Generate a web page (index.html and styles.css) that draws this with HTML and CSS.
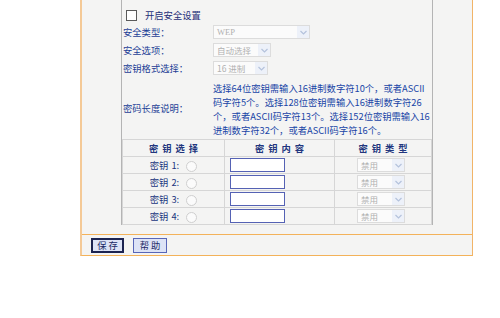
FILE: index.html
```html
<!DOCTYPE html>
<html>
<head>
<meta charset="utf-8">
<link rel="stylesheet" href="styles.css">
</head>
<body>
<div class="panel">
  <div class="content">
    <div class="box">
      <div class="check-row">
        <span class="checkbox"></span>
        <span class="check-label">开启安全设置</span>
      </div>
      <div class="form-row">
        <span class="label">安全类型：</span>
        <span class="select sel-wep"><span class="sel-text">WEP</span><span class="arrow"><svg width="7" height="5" viewBox="0 0 7 5"><path d="M0.5 1 L3.5 4 L6.5 1" fill="none" stroke="#b4c2dc" stroke-width="1.2"/></svg></span></span>
      </div>
      <div class="form-row">
        <span class="label">安全选项：</span>
        <span class="select sel-auto"><span class="sel-text">自动选择</span><span class="arrow"><svg width="7" height="5" viewBox="0 0 7 5"><path d="M0.5 1 L3.5 4 L6.5 1" fill="none" stroke="#b4c2dc" stroke-width="1.2"/></svg></span></span>
      </div>
      <div class="form-row">
        <span class="label">密钥格式选择：</span>
        <span class="select sel-hex"><span class="sel-text">16 进制</span><span class="arrow"><svg width="7" height="5" viewBox="0 0 7 5"><path d="M0.5 1 L3.5 4 L6.5 1" fill="none" stroke="#b4c2dc" stroke-width="1.2"/></svg></span></span>
      </div>
      <div class="desc-row">
        <span class="label desc-label">密码长度说明：</span>
        <p class="desc">选择64位密钥需输入16进制数字符10个，或者ASCII<br>码字符5个。选择128位密钥需输入16进制数字符26<br>个，或者ASCII码字符13个。选择152位密钥需输入16<br>进制数字符32个，或者ASCII码字符16个。</p>
      </div>
      <table class="keys">
        <colgroup><col class="c1"><col class="c2"><col class="c3"></colgroup>
        <thead>
          <tr><th>密钥选择</th><th>密钥内容</th><th>密钥类型</th></tr>
        </thead>
        <tbody>
          <tr><td class="kname">密钥 1: <span class="radio"></span></td><td class="kval"><span class="input"></span></td><td class="ktype"><span class="select sel-type"><span class="sel-text">禁用</span><span class="arrow"><svg width="7" height="5" viewBox="0 0 7 5"><path d="M0.5 1 L3.5 4 L6.5 1" fill="none" stroke="#b4c2dc" stroke-width="1.2"/></svg></span></span></td></tr>
          <tr><td class="kname">密钥 2: <span class="radio"></span></td><td class="kval"><span class="input"></span></td><td class="ktype"><span class="select sel-type"><span class="sel-text">禁用</span><span class="arrow"><svg width="7" height="5" viewBox="0 0 7 5"><path d="M0.5 1 L3.5 4 L6.5 1" fill="none" stroke="#b4c2dc" stroke-width="1.2"/></svg></span></span></td></tr>
          <tr><td class="kname">密钥 3: <span class="radio"></span></td><td class="kval"><span class="input"></span></td><td class="ktype"><span class="select sel-type"><span class="sel-text">禁用</span><span class="arrow"><svg width="7" height="5" viewBox="0 0 7 5"><path d="M0.5 1 L3.5 4 L6.5 1" fill="none" stroke="#b4c2dc" stroke-width="1.2"/></svg></span></span></td></tr>
          <tr><td class="kname">密钥 4: <span class="radio"></span></td><td class="kval"><span class="input"></span></td><td class="ktype"><span class="select sel-type"><span class="sel-text">禁用</span><span class="arrow"><svg width="7" height="5" viewBox="0 0 7 5"><path d="M0.5 1 L3.5 4 L6.5 1" fill="none" stroke="#b4c2dc" stroke-width="1.2"/></svg></span></span></td></tr>
        </tbody>
      </table>
    </div>
  </div>
  <div class="buttons">
    <span class="btn btn-save">保 存</span>
    <span class="btn btn-help">帮 助</span>
  </div>
</div>
</body>
</html>
```
FILE: styles.css
```css
html, body {
  margin: 0;
  padding: 0;
  background: #ffffff;
}
body {
  font-family: "Noto Sans CJK SC", "Liberation Serif", sans-serif;
  font-size: 9.3px;
  color: #1d3e96;
}
.panel {
  margin-left: 80px;
  width: 393px;
  box-sizing: border-box;
  border-left: 2px solid #f4c996;
  border-right: 1px solid #f1b468;
  border-bottom: 1px solid #f3b25a;
  background: #f4f4f3;
}
.content {
  padding: 0 39px 9px 39px;
}
.box {
  border-left: 1px solid #b4b4b4;
  border-right: 1px solid #b4b4b4;
  padding-top: 7px;
}
.check-row {
  height: 16px;
  display: flex;
  align-items: center;
  padding-left: 4px;
}
.checkbox {
  width: 9px;
  height: 9px;
  border: 1px solid #5a5a5a;
  background: #fff;
  margin-right: 8px;
}
.check-label {
  color: #1f2f78;
}
.form-row {
  height: 18px;
  display: flex;
  align-items: center;
}
.label {
  width: 90px;
  padding-left: 1px;
  flex: none;
}
.select {
  display: flex;
  align-items: center;
  height: 14px;
  box-sizing: border-box;
  border: 1px solid #dcdcdc;
  background: #fbfbfb;
  color: #b0b0b0;
  font-size: 8.5px;
}
.sel-text {
  flex: 1;
  padding-left: 3px;
  white-space: nowrap;
}
.arrow {
  width: 12px;
  height: 12px;
  background: #edf1f9;
  display: flex;
  align-items: center;
  justify-content: center;
}
.sel-wep { width: 97px; font-family: "Liberation Serif", serif; }
.sel-auto { width: 58px; }
.sel-hex { width: 55px; }
.sel-type { width: 48px; }
.desc-row {
  display: flex;
  align-items: center;
  padding: 4px 0 2px 0;
}
.desc-label {
  padding-bottom: 3px;
}
.desc {
  margin: 0;
  line-height: 14px;
  white-space: nowrap;
  color: #1844a6;
}
.keys {
  width: 100%;
  border-collapse: collapse;
  border: 1px solid #bdbdbd;
  border-bottom-color: #a8a8a8;
}
.c1 { width: 102px; }
.c2 { width: 110px; }
.keys th, .keys td {
  border: 1px solid #d6d6d6;
  height: 16px;
  padding: 0;
  background: #f4f4f3;
}
.keys th {
  font-weight: bold;
  color: #22367e;
  text-align: center;
  letter-spacing: 4px;
  text-indent: 4px;
}
.kname {
  text-align: center;
  color: #22367e;
  word-spacing: 1px;
}
.radio {
  display: inline-block;
  width: 9px;
  height: 9px;
  border: 1px solid #cfcfcf;
  border-radius: 50%;
  background: #fbfbfb;
  vertical-align: middle;
  margin-left: 4px;
}
.kval {
  padding-left: 5px !important;
}
.input {
  display: block;
  width: 55px;
  height: 14px;
  box-sizing: border-box;
  border: 1px solid #5562b4;
  background: #fff;
}
.ktype {
  padding-left: 22px !important;
}
.buttons {
  border-top: 1px solid #f3b25a;
  height: 20px;
  display: flex;
  align-items: center;
  gap: 9px;
  padding-left: 9px;
}
.btn {
  box-sizing: border-box;
  height: 15px;
  display: flex;
  align-items: center;
  justify-content: center;
  background: #dde3f6;
  color: #1c2a66;
  font-size: 9.3px;
}
.btn-save {
  width: 33px;
  border: 2px solid #1c2350;
}
.btn-help {
  width: 34px;
  border: 1px solid #5866b8;
}
```
